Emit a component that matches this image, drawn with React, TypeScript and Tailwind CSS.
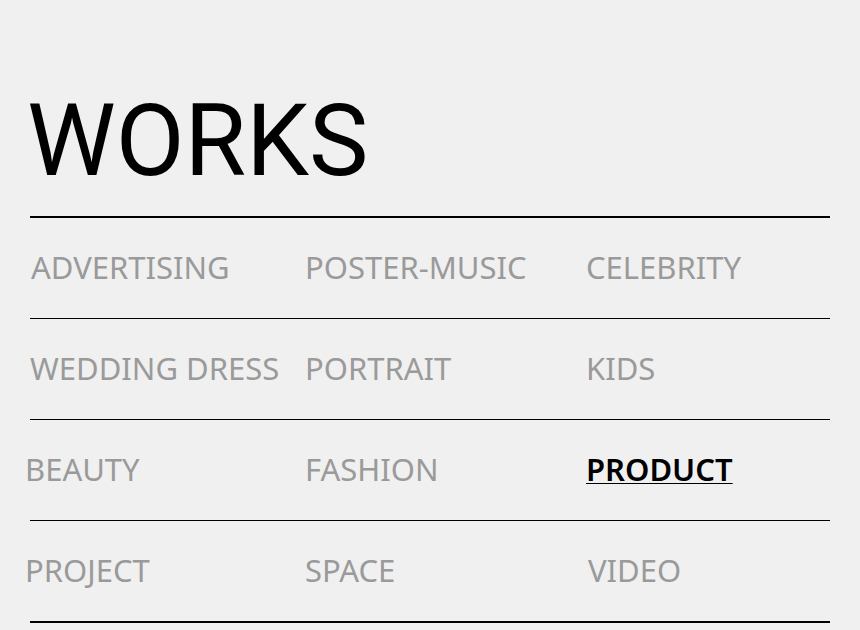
const rows: { label: string; active?: boolean; shift?: string }[][] = [
  [{ label: "ADVERTISING", shift: "ml-[1px]" }, { label: "POSTER-MUSIC" }, { label: "CELEBRITY" }],
  [{ label: "WEDDING DRESS" }, { label: "PORTRAIT" }, { label: "KIDS" }],
  [{ label: "BEAUTY", shift: "-ml-[5px]" }, { label: "FASHION" }, { label: "PRODUCT", active: true }],
  [{ label: "PROJECT", shift: "-ml-[5px]" }, { label: "SPACE" }, { label: "VIDEO", shift: "ml-[2px]" }],
];

export default function App() {
  return (
    <div className="min-h-screen w-full bg-[#f0f0f0] px-[30px] pt-[91px]">
      {/* title */}
      <h1 className="-ml-[3px] font-['Roboto',sans-serif] text-[100px] font-normal leading-none text-black">
        WORKS
      </h1>

      {/* category grid */}
      <div className="mt-[25px] w-[800px] border-t-2 border-black">
        {rows.map((row, i) => (
          <div
            key={i}
            className="grid h-[101px] grid-cols-[275px_281px_1fr] items-center border-b border-black pb-[2px] last:h-[102px] last:border-b-2"
          >
            {row.map((item) => (
              <a
                key={item.label}
                href="#"
                className={
                  "font-['Noto_Sans',sans-serif] text-[31px] leading-none " +
                  (item.shift ?? "") +
                  (item.active
                    ? " font-semibold text-black underline decoration-1 underline-offset-2"
                    : " font-normal text-[#9a9a9a]")
                }
              >
                {item.label}
              </a>
            ))}
          </div>
        ))}
      </div>
    </div>
  );
}
